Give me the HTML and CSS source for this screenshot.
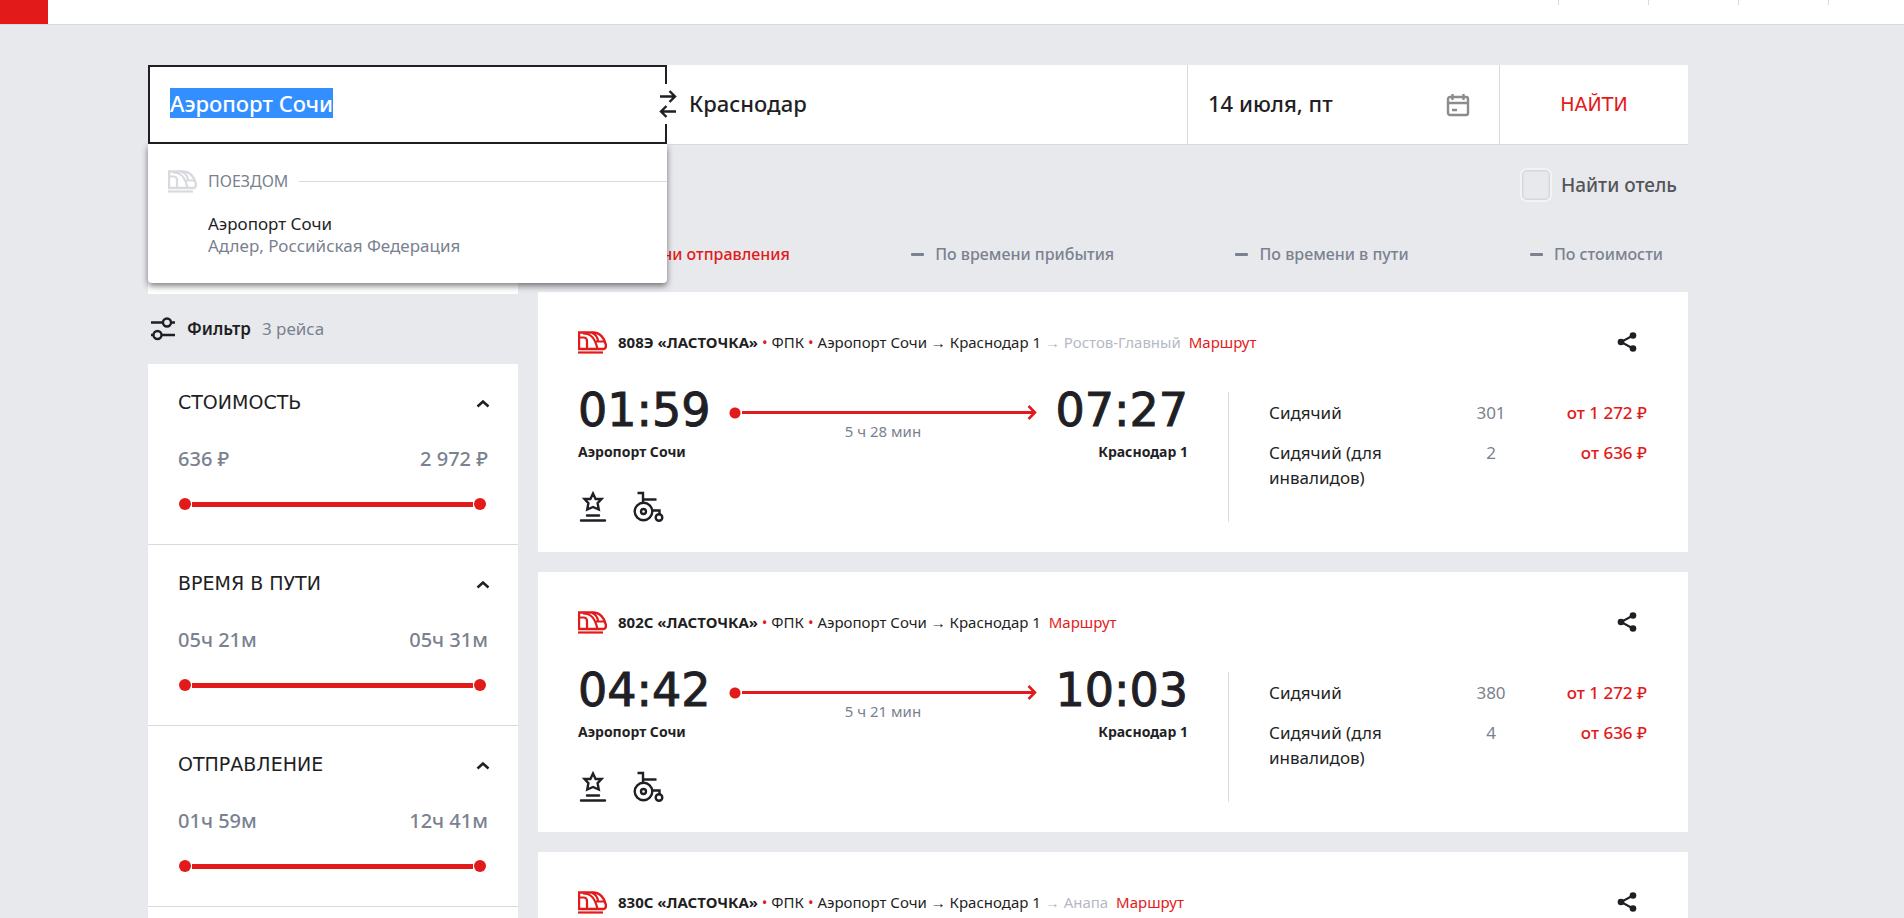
FILE: index.html
```html
<!DOCTYPE html>
<html lang="ru">
<head>
<meta charset="utf-8">
<title>Аэропорт Сочи — Краснодар</title>
<meta name="viewport" content="width=device-width, initial-scale=1">
<link rel="stylesheet" href="styles.css">
</head>
<body>
<svg class="sprite" aria-hidden="true">
  <symbol id="train" viewBox="0 0 29 23">
    <path d="M1 1.500H15C22 1.500 26.500 7 27.800 13.500C28.300 16.500 27 18 25.500 18H1Z" fill="none" stroke="currentColor" stroke-width="2.400"/>
    <path d="M1 6.500H5.500Q9 6.500 9 10V18M5 2.500C13 2.500 17 7 19.500 18M14 2C17 3 19.500 6 20 10M18 10.500H27" fill="none" stroke="currentColor" stroke-width="2.200"/>
    <path d="M0 21.500H25" stroke="currentColor" stroke-width="2.200"/>
  </symbol>
  <symbol id="star" viewBox="0 0 31 32">
    <path d="M15 3.500L17.600 9H23.500L19.600 13.200L20.800 19.500L15 17L9.200 19.500L10.400 13.200L6.500 9H12.400Z" fill="none" stroke="currentColor" stroke-width="2.400"/>
    <path d="M9 25.500H21M3 30.500H27" stroke="currentColor" stroke-width="2.400" stroke-linecap="round"/>
  </symbol>
  <symbol id="wheelchair" viewBox="0 0 31 32">
    <g fill="none" stroke="currentColor" stroke-width="2.400">
      <circle cx="10.500" cy="21.500" r="8.800"/><circle cx="10.500" cy="21.500" r="2.500"/><circle cx="26" cy="27.500" r="3.300"/>
      <path d="M4.500 3H10V13M10 9.500H23.500M19.500 20.500H26.500V24"/>
    </g>
  </symbol>
  <symbol id="share" viewBox="0 0 20 20">
    <g fill="currentColor"><circle cx="4" cy="10" r="3.300"/><circle cx="16" cy="3.500" r="3.300"/><circle cx="16" cy="16.500" r="3.300"/></g>
    <path d="M16 3.500L4 10L16 16.500" fill="none" stroke="currentColor" stroke-width="2"/>
  </symbol>
  <symbol id="chevron" viewBox="0 0 14 8"><path d="M1.500 6.500L7 1.500L12.500 6.500" fill="none" stroke="currentColor" stroke-width="2.500"/></symbol>
  <symbol id="arrowhead" viewBox="0 0 10 16"><path d="M1.500 1.500L8 8L1.500 14.500" fill="none" stroke="currentColor" stroke-width="2.500"/></symbol>
</svg>

<header class="topbar">
  <div class="topbar-logo"></div>
  <div class="topbar-links"><span></span><span></span><span></span><span></span></div>
</header>

<div class="layout">
<main class="page">
  <form class="search">
    <div class="field field-from">
      <input id="from" class="field-input" type="text" value="Аэропорт Сочи" aria-label="Откуда" autocomplete="off">
      <button class="swap" type="button" aria-label="Поменять местами">
        <svg width="18" height="28" viewBox="0 0 18 28"><path d="M1 6.500H16M10.500 1L16 6.500L10.500 12M17 21.500H2M7.500 16L2 21.500L7.500 27" fill="none" stroke="currentColor" stroke-width="2.400"/></svg>
      </button>
      <div class="suggest">
        <div class="suggest-group"><svg class="suggest-icon"><use href="#train"/></svg><span>ПОЕЗДОМ</span></div>
        <div class="suggest-item">
          <div>Аэропорт Сочи</div>
          <div class="muted">Адлер, Российская Федерация</div>
        </div>
      </div>
    </div>
    <div class="field"><input class="field-input field-to" type="text" value="Краснодар" aria-label="Куда" autocomplete="off"></div>
    <div class="field field-date">
      <input class="field-input" type="text" value="14 июля, пт" aria-label="Дата">
      <svg class="calendar" viewBox="0 0 24 24"><g fill="none" stroke="currentColor" stroke-width="2.400"><rect x="2" y="4" width="20" height="18" rx="2"/><path d="M2 10H22M6.500 1V7M17.500 1V7M6 17H11"/></g></svg>
    </div>
    <button class="search-submit" type="submit">НАЙТИ</button>
  </form>

  <label class="hotel"><input class="hotel-box" type="checkbox"><span>Найти отель</span></label>

  <div class="columns">
    <aside class="sidebar">
      <div class="promo"></div>
      <div class="filter-head">
        <svg width="26" height="24" viewBox="0 0 26 24"><g fill="none" stroke="currentColor" stroke-width="2.400"><path d="M1 5.500H13M21 5.500H25M1 18H4M12 18H25"/><circle cx="17" cy="5.500" r="4"/><circle cx="7.500" cy="18" r="4"/></g></svg>
        <b>Фильтр</b><span>3 рейса</span>
      </div>
      <div class="filters">
        <section class="filter">
          <button class="filter-title" type="button">СТОИМОСТЬ<svg class="chevron"><use href="#chevron"/></svg></button>
          <div class="filter-values"><span>636 ₽</span><span>2 972 ₽</span></div>
          <div class="slider"><input type="range" value="0" aria-label="Стоимость от"><input type="range" value="100" aria-label="Стоимость до"></div>
        </section>
        <section class="filter">
          <button class="filter-title" type="button">ВРЕМЯ В ПУТИ<svg class="chevron"><use href="#chevron"/></svg></button>
          <div class="filter-values"><span>05ч 21м</span><span>05ч 31м</span></div>
          <div class="slider"><input type="range" value="0" aria-label="Время в пути от"><input type="range" value="100" aria-label="Время в пути до"></div>
        </section>
        <section class="filter">
          <button class="filter-title" type="button">ОТПРАВЛЕНИЕ<svg class="chevron"><use href="#chevron"/></svg></button>
          <div class="filter-values"><span>01ч 59м</span><span>12ч 41м</span></div>
          <div class="slider"><input type="range" value="0" aria-label="Отправление от"><input type="range" value="100" aria-label="Отправление до"></div>
        </section>
        <section class="filter"></section>
      </div>
    </aside>

    <div class="results">
      <nav class="sort">
        <button class="sort-item sort-active" type="button">По времени отправления</button>
        <button class="sort-item" type="button">По времени прибытия</button>
        <button class="sort-item" type="button">По времени в пути</button>
        <button class="sort-item" type="button">По стоимости</button>
      </nav>

      <article class="card">
        <div class="card-head">
          <svg class="train"><use href="#train"/></svg>
          <div class="card-route"><b>808Э «ЛАСТОЧКА»</b> <i>•</i> ФПК <i>•</i> Аэропорт Сочи → Краснодар 1 <span class="faded">→ Ростов-Главный</span> <a href="#">Маршрут</a></div>
          <button class="share" type="button" aria-label="Поделиться"><svg><use href="#share"/></svg></button>
        </div>
        <div class="card-body">
          <div class="trip">
            <div class="trip-row">
              <time>01:59</time>
              <div class="track"><div class="track-line"><svg><use href="#arrowhead"/></svg></div><div class="duration">5 ч 28 мин</div></div>
              <time>07:27</time>
            </div>
            <div class="stations"><span>Аэропорт Сочи</span><span>Краснодар 1</span></div>
            <div class="services"><svg><use href="#star"/></svg><svg><use href="#wheelchair"/></svg></div>
          </div>
          <div class="seats"><table>
            <tr><td>Сидячий</td><td class="count">301</td><td class="price">от 1 272 ₽</td></tr>
            <tr><td>Сидячий (для инвалидов)</td><td class="count">2</td><td class="price">от 636 ₽</td></tr>
          </table></div>
        </div>
      </article>

      <article class="card">
        <div class="card-head">
          <svg class="train"><use href="#train"/></svg>
          <div class="card-route"><b>802С «ЛАСТОЧКА»</b> <i>•</i> ФПК <i>•</i> Аэропорт Сочи → Краснодар 1 <a href="#">Маршрут</a></div>
          <button class="share" type="button" aria-label="Поделиться"><svg><use href="#share"/></svg></button>
        </div>
        <div class="card-body">
          <div class="trip">
            <div class="trip-row">
              <time>04:42</time>
              <div class="track"><div class="track-line"><svg><use href="#arrowhead"/></svg></div><div class="duration">5 ч 21 мин</div></div>
              <time>10:03</time>
            </div>
            <div class="stations"><span>Аэропорт Сочи</span><span>Краснодар 1</span></div>
            <div class="services"><svg><use href="#star"/></svg><svg><use href="#wheelchair"/></svg></div>
          </div>
          <div class="seats"><table>
            <tr><td>Сидячий</td><td class="count">380</td><td class="price">от 1 272 ₽</td></tr>
            <tr><td>Сидячий (для инвалидов)</td><td class="count">4</td><td class="price">от 636 ₽</td></tr>
          </table></div>
        </div>
      </article>

      <article class="card">
        <div class="card-head">
          <svg class="train"><use href="#train"/></svg>
          <div class="card-route"><b>830С «ЛАСТОЧКА»</b> <i>•</i> ФПК <i>•</i> Аэропорт Сочи → Краснодар 1 <span class="faded">→ Анапа</span> <a href="#">Маршрут</a></div>
          <button class="share" type="button" aria-label="Поделиться"><svg><use href="#share"/></svg></button>
        </div>
      </article>
    </div>
  </div>
</main>
</div>
<script src="script.js"></script>
</body>
</html>
```

FILE: styles.css
```css
:root {
  --ink: #1f1f25;
  --red: #e21a1a;
  --gray: #7a828f;
  --line: #d8dade;
  --bg: #e8e9ed;
  --wide: "DejaVu Sans", Verdana, sans-serif;
}
* { box-sizing: border-box; }
html { scrollbar-width: none; }
body {
  margin: 0;
  background: var(--bg);
  color: var(--ink);
  font: 17px/20px "Noto Sans", sans-serif;
}
button, input { font: inherit; color: inherit; }
button { padding: 0; border: 0; background: none; cursor: pointer; }
svg { display: block; }
.sprite { position: absolute; width: 0; height: 0; }
.muted { color: var(--gray); }

.topbar {
  display: flex;
  justify-content: space-between;
  height: 25px;
  background: #fff;
  border-bottom: 1px solid var(--line);
}
.topbar-logo { width: 48px; background: var(--red); }
.topbar-links { display: flex; padding-right: 75px; gap: 89px; }
.topbar-links span { width: 1px; height: 5px; background: var(--line); }

.layout { padding-right: 68px; }
.page { max-width: 1580px; margin: 0 auto; padding: 40px 20px 0; }

.search {
  display: grid;
  grid-template-columns: 519fr 520fr 313fr 188fr;
  height: 80px;
  background: #fff;
  border-bottom: 1px solid var(--line);
}
.field { position: relative; display: flex; align-items: center; min-width: 0; }
.field-input {
  width: 100%;
  height: 79px;
  padding: 0 20px 4px;
  border: 0;
  border-radius: 0;
  outline: 0;
  background: none;
  font-size: 22px;
  font-weight: 500;
}
.field-from .field-input { padding: 0 20px 4px; border: 2px solid var(--ink); }
.field-input::selection { background: #338fff; color: #fff; }
.field-to { padding-left: 22px; }
.field-date { border-left: 1px solid var(--line); border-right: 1px solid var(--line); }
.calendar { flex: none; width: 24px; height: 24px; margin-right: 29px; color: #8c8c8f; }
.search-submit { padding-bottom: 2px; font: 19px/20px var(--wide); color: var(--red); }
.swap {
  position: absolute;
  right: -11px;
  top: 19px;
  display: grid;
  place-items: center;
  width: 20px;
  height: 40px;
  background: #fff;
}
.suggest {
  position: absolute;
  z-index: 2;
  top: 79px;
  left: 0;
  right: 0;
  padding: 25px 0 26px 20px;
  background: #fff;
  border-radius: 0 0 4px 4px;
  box-shadow: 0 3px 6px rgba(0, 0, 0, .5);
}
.suggest-group { display: flex; align-items: center; gap: 11px; height: 24px; font-size: 16px; color: var(--gray); }
.suggest-group::after { content: ""; flex: 1; height: 1px; background: var(--line); }
.suggest-icon { width: 29px; height: 23px; color: #d8dade; }
.suggest-item { padding: 20px 0 0 40px; line-height: 22px; }

.hotel {
  display: flex;
  align-items: center;
  gap: 11px;
  width: max-content;
  margin: 25px 11px 0 auto;
  font-size: 19px;
  font-weight: 500;
  line-height: 30px;
  color: #55555b;
}
.hotel-box {
  appearance: none;
  width: 28px;
  height: 30px;
  margin: 0;
  border: 1px solid #d6d7da;
  border-radius: 5px;
  box-shadow: inset 0 0 0 1px #e0e1e4, 0 0 0 2px #f2f3f5;
}

.columns { display: grid; grid-template-columns: 370px 1fr; gap: 20px; padding-top: 34px; }
.promo { height: 60px; background: #fff; }
.filter-head { display: flex; align-items: center; gap: 11px; height: 70px; padding-left: 2px; }
.filter-head b { font-weight: 600; }
.filter-head span { color: var(--gray); }
.filters { background: #fff; }
.filter { height: 181px; padding: 26px 30px 0; border-bottom: 1px solid var(--line); }
.filter-title {
  display: flex;
  align-items: center;
  justify-content: space-between;
  width: 100%;
  height: 24px;
  font: 19px/24px var(--wide);
}
.chevron { width: 14px; height: 8px; margin: 4px -2px 0 0; }
.filter-values {
  display: flex;
  justify-content: space-between;
  padding-top: 33px;
  font-size: 20px;
  font-weight: 500;
  line-height: 24px;
  color: var(--gray);
}
.slider {
  display: grid;
  align-items: center;
  height: 12px;
  margin: 27px 2px 0 1px;
  background: linear-gradient(var(--red), var(--red)) center / calc(100% - 26px) 5px no-repeat;
}
.slider input {
  grid-area: 1 / 1;
  appearance: none;
  width: 100%;
  height: 12px;
  margin: 0;
  background: none;
  pointer-events: none;
}
.slider input::-webkit-slider-thumb {
  appearance: none;
  width: 12px;
  height: 12px;
  border-radius: 50%;
  background: var(--red);
  pointer-events: auto;
}

.sort { display: flex; justify-content: space-between; height: 58px; padding: 10px 25px 0; }
.sort-item { display: flex; align-items: center; gap: 11px; height: 20px; font-size: 16px; font-weight: 500; color: var(--gray); }
.sort-item::before { content: ""; width: 13px; height: 3px; border-radius: 1px; background: currentColor; }
.sort-item.sort-active { color: var(--red); }

.card { margin-bottom: 20px; padding: 38px 40px 30px; background: #fff; }
.card-head { display: flex; align-items: center; gap: 11px; height: 24px; font-size: 15px; }
.train { width: 29px; height: 23px; color: var(--red); }
.card-route i, .card-route a { color: var(--red); font-style: normal; text-decoration: none; }
.card-route a { margin-left: 4px; }
.faded { color: #b5b9c4; }
.share { margin: 0 11px 0 auto; }
.share svg { width: 20px; height: 20px; }
.card-body { display: grid; grid-template-columns: 1fr 420px; margin-top: 38px; }
.trip { padding-right: 40px; }
.trip-row { display: flex; align-items: flex-start; gap: 18px; }
.trip-row time { font: 46px/36px var(--wide); -webkit-text-stroke: 1px currentColor; }
.track { flex: 1; padding-top: 12px; }
.track-line {
  display: flex;
  align-items: center;
  justify-content: flex-end;
  height: 17px;
  color: var(--red);
  background:
    radial-gradient(circle at 6px 9px, var(--red) 5px, transparent 6px),
    linear-gradient(var(--red), var(--red)) 13px 7px / calc(100% - 15px) 3px no-repeat;
}
.track-line svg { width: 10px; height: 17px; }
.duration { font-size: 15px; text-align: center; color: var(--gray); }
.stations { display: flex; justify-content: space-between; padding-top: 1px; font-size: 14px; font-weight: 700; }
.services { display: flex; gap: 24px; padding-top: 28px; }
.services svg { width: 31px; height: 32px; }
.seats { padding: 8px 1px 0 40px; border-left: 1px solid var(--line); }
.seats table { width: 100%; border-collapse: collapse; table-layout: fixed; line-height: 25px; }
.seats td { padding: 0 0 15px; vertical-align: top; }
.seats tr:last-child td { padding-bottom: 0; }
.seats td:first-child { width: 182px; padding-right: 30px; }
.seats .count { width: 80px; text-align: center; color: var(--gray); }
.seats .price { text-align: right; white-space: nowrap; font-weight: 500; color: var(--red); }
```

FILE: script.js
```js
const from = document.getElementById("from");
from.focus();
from.select();
```
